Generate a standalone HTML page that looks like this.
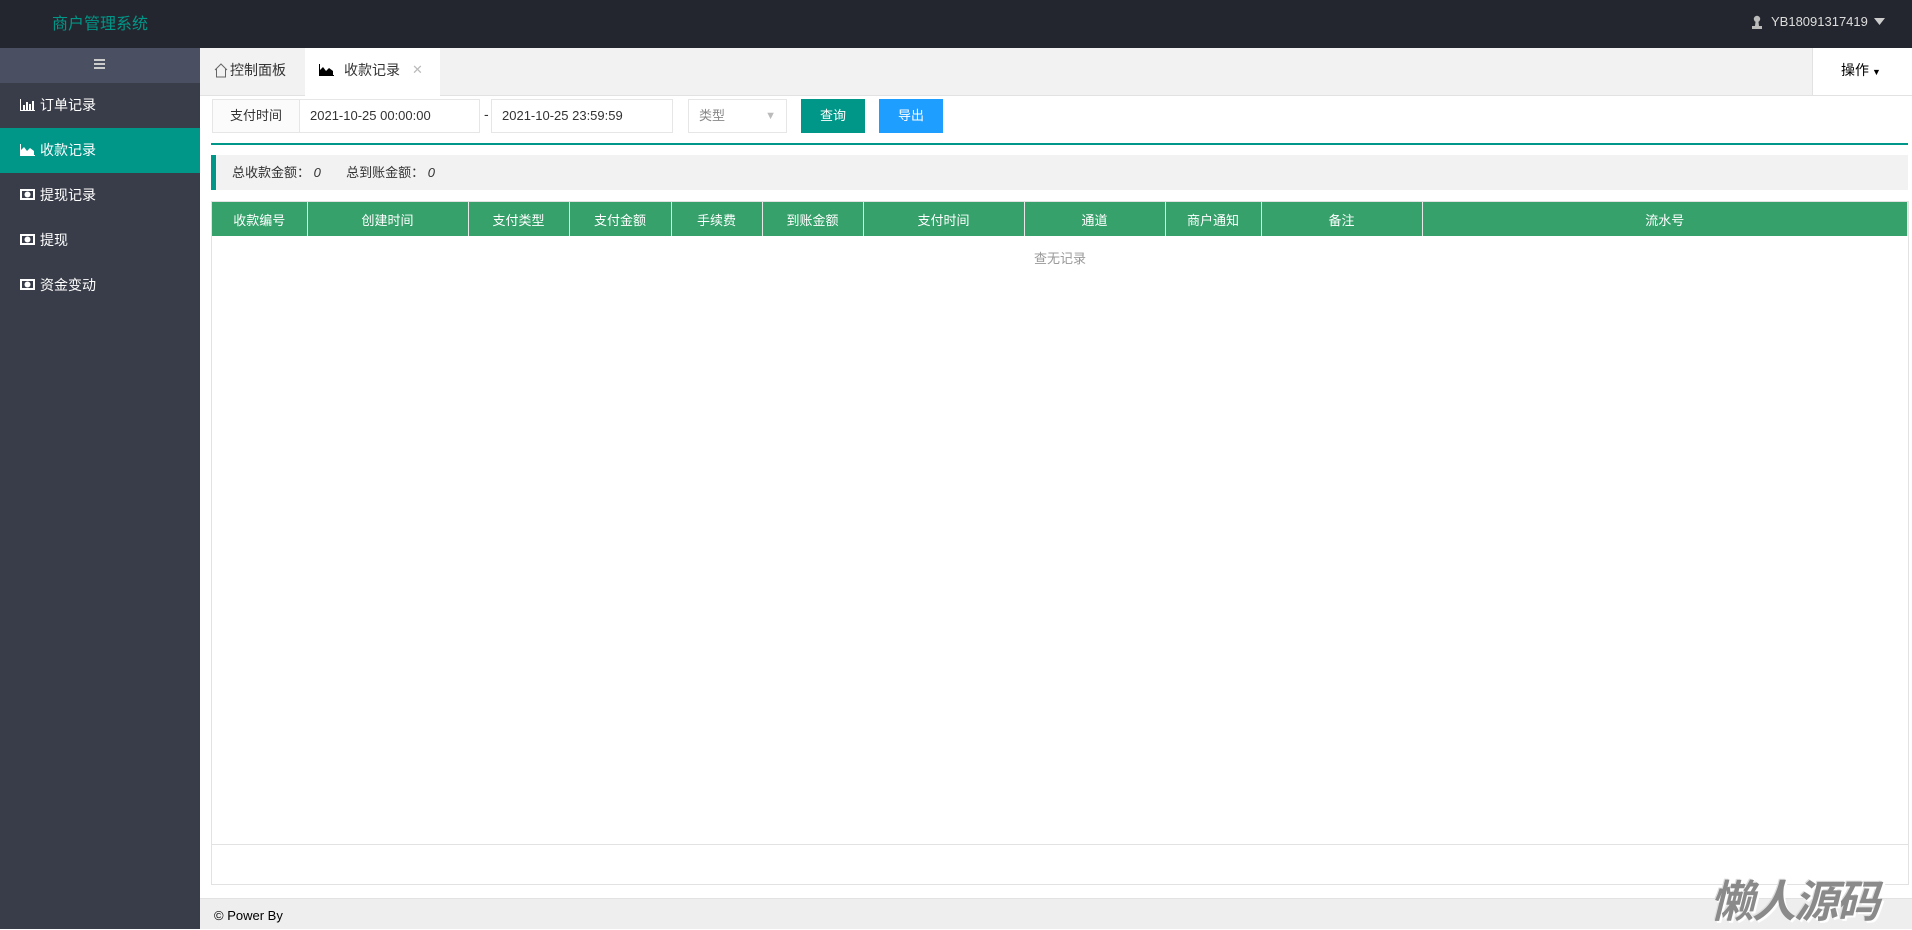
<!DOCTYPE html>
<html><head><meta charset="utf-8"><style>
*{margin:0;padding:0;box-sizing:border-box}
body{width:1912px;height:929px;overflow:hidden;background:#fff;font-family:"Liberation Sans","Noto Sans CJK SC",sans-serif;font-size:14px;color:#333;position:relative}
.abs{position:absolute}
.hdr{left:0;top:0;width:1912px;height:48px;background:#23262e}
.side{left:0;top:48px;width:200px;height:881px;background:#393d49}
.mi{position:absolute;left:0;width:200px;height:45px;line-height:45px;color:#fff;padding-left:40px;font-size:14px}
.mi .ic{position:absolute;left:20px;top:16px}
.tabs{left:200px;top:48px;width:1712px;height:48px;background:#f2f2f2;border-bottom:1px solid #e2e2e2}
.inp{border:1px solid #e6e6e6;height:34px;line-height:32px;background:#fff;font-size:13px;color:#333}
th{background:#36a16b;color:#fff;font-weight:normal;height:34px;font-size:13px;border-right:1px solid #e8e8e8}
</style></head><body>
<div class="abs hdr"></div>
<div class="abs" style="left:52px;top:10px;color:#009688;font-size:16px">商户管理系统</div>
<div class="abs" style="left:1751px;top:14px;color:#ddd;font-size:13px;display:flex;align-items:center">
<svg width="12" height="14" viewBox="0 0 12 14"><circle cx="6" cy="4" r="3.2" fill="#bbb"/><path d="M4.5 7h3l0.5 4h3v3H1v-3h3z" fill="#bbb"/></svg>
<span style="margin-left:8px">YB18091317419</span>
<svg style="margin-left:6px" width="11" height="7" viewBox="0 0 11 7"><path d="M0 0h11L5.5 7z" fill="#ccc"/></svg></div>

<div class="abs side"></div>
<div class="abs" style="left:0;top:48px;width:200px;height:35px;background:#4a4f62"></div>
<div class="abs" style="left:94px;top:59px;width:11px;height:10px;border-top:2px solid #ccc;border-bottom:2px solid #ccc"><div style="margin-top:2px;height:2px;background:#ccc"></div></div>
<div class="mi" style="top:83px"><svg class="ic" width="15" height="12" viewBox="0 0 15 12"><path d="M0.5 0v11.5H15" stroke="#fff" fill="none"/><rect x="3" y="6" width="2" height="5" fill="#fff"/><rect x="6" y="3" width="2" height="8" fill="#fff"/><rect x="9" y="5" width="2" height="6" fill="#fff"/><rect x="12" y="2" width="2" height="9" fill="#fff"/></svg>订单记录</div>
<div class="mi" style="top:128px;background:#009688"><svg class="ic" width="15" height="12" viewBox="0 0 15 12"><path d="M0.5 0v11.5H15" stroke="#fff" fill="none"/><path d="M1 11V6l3-3 3 4 3-3 4 3v4z" fill="#fff"/></svg>收款记录</div>
<div class="mi" style="top:173px"><svg class="ic" width="15" height="11" viewBox="0 0 15 11"><rect x="0" y="0" width="15" height="11" fill="#fff"/><rect x="2" y="2" width="11" height="7" fill="#393d49"/><circle cx="7.5" cy="5.5" r="3" fill="#fff"/></svg>提现记录</div>
<div class="mi" style="top:218px"><svg class="ic" width="15" height="11" viewBox="0 0 15 11"><rect x="0" y="0" width="15" height="11" fill="#fff"/><rect x="2" y="2" width="11" height="7" fill="#393d49"/><circle cx="7.5" cy="5.5" r="3" fill="#fff"/></svg>提现</div>
<div class="mi" style="top:263px"><svg class="ic" width="15" height="11" viewBox="0 0 15 11"><rect x="0" y="0" width="15" height="11" fill="#fff"/><rect x="2" y="2" width="11" height="7" fill="#393d49"/><circle cx="7.5" cy="5.5" r="3" fill="#fff"/></svg>资金变动</div>

<div class="abs tabs"></div>
<div class="abs" style="left:214px;top:60px;font-size:14px;color:#333;display:flex;align-items:center"><svg width="14" height="15" viewBox="0 0 14 15"><path d="M1 7L7 1l6 6M2.5 6v8h9V6" stroke="#666" fill="none"/></svg><span style="margin-left:2px">控制面板</span></div>
<div class="abs" style="left:305px;top:48px;width:135px;height:49px;background:#fff"></div>
<div class="abs" style="left:319px;top:60px;font-size:14px;color:#333;display:flex;align-items:center"><svg width="15" height="12" viewBox="0 0 15 12"><path d="M0.5 0v11.5H15" stroke="#000" fill="none"/><path d="M1 11V6l3-3 3 4 3-3 4 3v4z" fill="#000"/></svg><span style="margin-left:10px">收款记录</span><span style="margin-left:12px;color:#bbb;font-size:13px">✕</span></div>
<div class="abs" style="left:1812px;top:48px;width:100px;height:48px;background:#fff;border-left:1px solid #e2e2e2;border-bottom:1px solid #e2e2e2"></div>
<div class="abs" style="left:1841px;top:60px;font-size:14px;color:#000">操作<span style="font-size:9px;margin-left:3px">▼</span></div>

<div class="abs inp" style="left:212px;top:99px;width:88px;background:#fbfbfb;text-align:center">支付时间</div>
<div class="abs inp" style="left:299px;top:99px;width:181px;padding-left:10px">2021-10-25 00:00:00</div>
<div class="abs" style="left:484px;top:106px">-</div>
<div class="abs inp" style="left:491px;top:99px;width:182px;padding-left:10px">2021-10-25 23:59:59</div>
<div class="abs inp" style="left:688px;top:99px;width:99px;padding-left:10px;color:#888">类型<span style="position:absolute;right:10px;top:0;color:#bbb;font-size:11px">▼</span></div>
<div class="abs" style="left:801px;top:99px;width:64px;height:34px;line-height:34px;background:#009688;color:#fff;text-align:center;font-size:13px">查询</div>
<div class="abs" style="left:879px;top:99px;width:64px;height:34px;line-height:34px;background:#1e9fff;color:#fff;text-align:center;font-size:13px">导出</div>
<div class="abs" style="left:211px;top:143px;width:1697px;height:2px;background:#009688"></div>

<div class="abs" style="left:211px;top:155px;width:1697px;height:35px;background:#f2f2f2;border-left:5px solid #009688;line-height:35px;padding-left:16px;font-size:13px">总收款金额：&nbsp;<i>0</i>&nbsp;&nbsp;&nbsp;&nbsp;&nbsp;&nbsp;&nbsp;总到账金额：&nbsp;<i>0</i></div>

<div class="abs" style="left:211px;top:201px;width:1698px;height:684px;border:1px solid #e2e2e2"></div>
<div class="abs" style="left:212px;top:844px;width:1696px;height:1px;background:#e2e2e2"></div>
<table class="abs" style="left:212px;top:202px;width:1696px;border-collapse:collapse;table-layout:fixed">
<tr><th style="width:95px">收款编号</th><th style="width:161px">创建时间</th><th style="width:101px">支付类型</th><th style="width:102px">支付金额</th><th style="width:91px">手续费</th><th style="width:101px">到账金额</th><th style="width:161px">支付时间</th><th style="width:141px">通道</th><th style="width:96px">商户通知</th><th style="width:161px">备注</th><th>流水号</th></tr></table>
<div class="abs" style="left:212px;top:248px;width:1696px;text-align:center;color:#999;font-size:13px">查无记录</div>

<div class="abs" style="left:200px;top:898px;width:1712px;height:31px;background:#eee;border-top:1px solid #e2e2e2"></div>
<div class="abs" style="left:214px;top:908px;font-size:13px;color:#000">© Power By</div>
<div class="abs" style="left:1710px;top:866px;font-size:44px;font-weight:bold;font-style:italic;color:#8a8a8a;letter-spacing:-2px;text-shadow:2px 2px 0 #fff,-1px -1px 0 #ddd">懒人源码</div>
</body></html>
